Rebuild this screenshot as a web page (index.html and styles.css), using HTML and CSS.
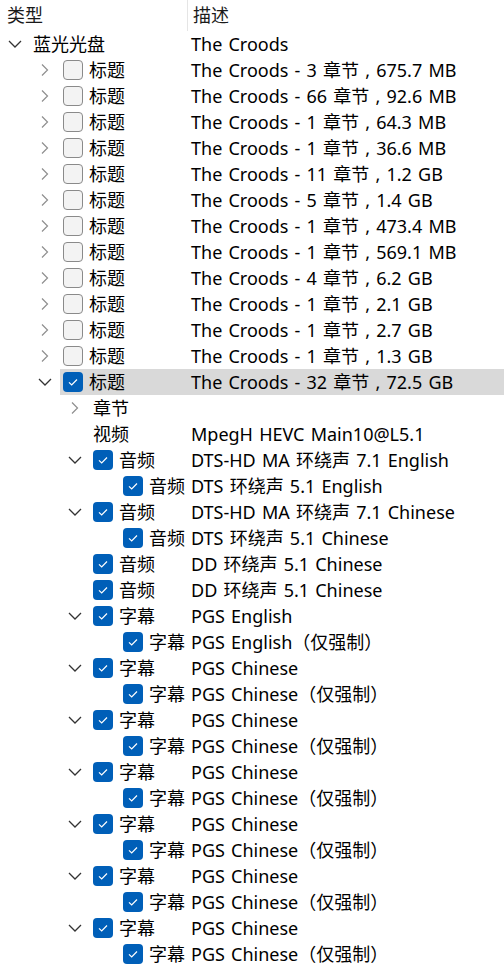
FILE: index.html
```html
<!DOCTYPE html>
<html lang="zh">
<head>
<meta charset="utf-8">
<link rel="stylesheet" href="styles.css">
</head>
<body>
<div class="tree">
  <div class="header">
    <div class="hcell h1">类型</div>
    <div class="hcell h2">描述</div>
  </div>
  <div id="rows"></div>
</div>
<script src="app.js"></script>
</body>
</html>
```
FILE: app.js
```js
const rows = [
  [0, 'open', null, '蓝光光盘', 'The Croods'],
  [1, 'closed', false, '标题', 'The Croods - 3 章节 , 675.7 MB'],
  [1, 'closed', false, '标题', 'The Croods - 66 章节 , 92.6 MB'],
  [1, 'closed', false, '标题', 'The Croods - 1 章节 , 64.3 MB'],
  [1, 'closed', false, '标题', 'The Croods - 1 章节 , 36.6 MB'],
  [1, 'closed', false, '标题', 'The Croods - 11 章节 , 1.2 GB'],
  [1, 'closed', false, '标题', 'The Croods - 5 章节 , 1.4 GB'],
  [1, 'closed', false, '标题', 'The Croods - 1 章节 , 473.4 MB'],
  [1, 'closed', false, '标题', 'The Croods - 1 章节 , 569.1 MB'],
  [1, 'closed', false, '标题', 'The Croods - 4 章节 , 6.2 GB'],
  [1, 'closed', false, '标题', 'The Croods - 1 章节 , 2.1 GB'],
  [1, 'closed', false, '标题', 'The Croods - 1 章节 , 2.7 GB'],
  [1, 'closed', false, '标题', 'The Croods - 1 章节 , 1.3 GB'],
  [1, 'open', true, '标题', 'The Croods - 32 章节 , 72.5 GB', 'sel'],
  [2, 'closed', null, '章节', ''],
  [2, null, null, '视频', 'MpegH HEVC Main10@L5.1'],
  [2, 'open', true, '音频', 'DTS-HD MA 环绕声 7.1 English'],
  [3, null, true, '音频', 'DTS 环绕声 5.1 English'],
  [2, 'open', true, '音频', 'DTS-HD MA 环绕声 7.1 Chinese'],
  [3, null, true, '音频', 'DTS 环绕声 5.1 Chinese'],
  [2, null, true, '音频', 'DD 环绕声 5.1 Chinese'],
  [2, null, true, '音频', 'DD 环绕声 5.1 Chinese'],
  [2, 'open', true, '字幕', 'PGS English'],
  [3, null, true, '字幕', 'PGS English（仅强制）'],
];
for (let i = 0; i < 6; i++) {
  rows.push([2, 'open', true, '字幕', 'PGS Chinese']);
  rows.push([3, null, true, '字幕', 'PGS Chinese（仅强制）']);
}
const chevOpen = '<svg width="14" height="8" viewBox="0 0 14 8"><polyline points="1,1 7,7 13,1" fill="none" stroke="#333" stroke-width="1.3"/></svg>';
const chevClosed = '<svg width="8" height="12" viewBox="0 0 8 12"><polyline points="1,0.5 6.5,6 1,11.5" fill="none" stroke="#8e8e8e" stroke-width="1.2"/></svg>';
const check = '<svg width="20" height="20" viewBox="0 0 20 20"><polyline points="6,10.3 8.7,13 14,7.5" fill="none" stroke="#fff" stroke-width="1.2"/></svg>';
const box = document.getElementById('rows');
for (const [lvl, exp, chk, label, desc, sel] of rows) {
  const r = document.createElement('div');
  r.className = 'row' + (sel ? ' sel' : '');
  let h = '<div class="c1"><span class="indent lv' + lvl + '"></span><span class="twist">';
  if (exp === 'open') h += chevOpen; else if (exp === 'closed') h += chevClosed;
  h += '</span>';
  if (chk === true) h += '<span class="cb on">' + check + '</span>';
  else if (chk === false) h += '<span class="cb"></span>';
  h += '<span class="lbl">' + label + '</span></div><div class="c2">' + desc + '</div>';
  r.innerHTML = h;
  box.appendChild(r);
}
```
FILE: styles.css
```css
html, body {
  margin: 0;
  padding: 0;
  background: #fff;
}
body {
  font-family: "Noto Sans", "Noto Sans CJK SC", sans-serif;
  font-size: 18px;
  color: #000;
  width: 504px;
  overflow: hidden;
}
.header {
  display: flex;
  height: 31px;
  align-items: stretch;
}
.hcell {
  display: flex;
  align-items: center;
  line-height: 31px;
  color: #1a1a1a;
}
.h1 {
  width: 180px;
  padding-left: 7px;
  border-right: 1px solid #e5e5e5;
}
.h2 {
  padding-left: 5px;
}
.row {
  display: flex;
  height: 26px;
  line-height: 26px;
  white-space: nowrap;
}
.row.sel {
  background: linear-gradient(90deg, transparent 60px, #d9d9d9 60px);
}
.c1 {
  width: 191px;
  flex: none;
  display: flex;
  align-items: center;
}
.c2 {
  flex: 1;
  word-spacing: 1.5px;
}
.indent { flex: none; }
.lv0 { width: 0; }
.lv1 { width: 30px; }
.lv2 { width: 60px; }
.lv3 { width: 90px; }
.twist {
  width: 30px;
  flex: none;
  display: flex;
  align-items: center;
  justify-content: center;
  margin-right: 3px;
}
.twist svg { display: block; }
.cb {
  width: 20px;
  height: 20px;
  box-sizing: border-box;
  border: 1px solid #8a8a8a;
  border-radius: 4px;
  background: #f3f3f3;
  flex: none;
  margin-right: 6px;
}
.cb.on {
  border: none;
  background: #005fb8;
}
.cb svg { display: block; }
.lbl { flex: none; }
```
